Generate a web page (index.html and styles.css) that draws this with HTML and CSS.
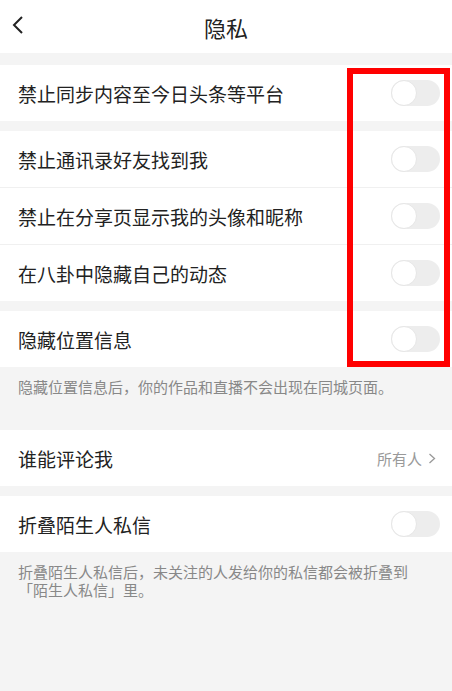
FILE: index.html
```html
<!DOCTYPE html>
<html lang="zh-CN">

<head>
    <meta charset="UTF-8">
    <meta name="viewport" content="width=device-width, initial-scale=1.0">
    <title>隐私</title>
    <link rel="stylesheet" href="styles.css">
</head>

<body>
    <header class="topBar">
        <svg class="backIcon" width="12" height="18" viewBox="0 0 12 18">
            <polyline points="10,1 2,9 10,17" fill="none" stroke="#222" stroke-width="2" />
        </svg>
        <h1>隐私</h1>
    </header>

    <div class="group first">
        <div class="row">
            <span>禁止同步内容至今日头条等平台</span>
            <span class="switch"></span>
        </div>
    </div>

    <div class="group">
        <div class="row">
            <span>禁止通讯录好友找到我</span>
            <span class="switch"></span>
        </div>
        <div class="row">
            <span>禁止在分享页显示我的头像和昵称</span>
            <span class="switch"></span>
        </div>
        <div class="row">
            <span>在八卦中隐藏自己的动态</span>
            <span class="switch"></span>
        </div>
    </div>

    <div class="group">
        <div class="row">
            <span>隐藏位置信息</span>
            <span class="switch"></span>
        </div>
    </div>
    <p class="note noteTall">隐藏位置信息后，你的作品和直播不会出现在同城页面。</p>

    <div class="group flush">
        <div class="row">
            <span>谁能评论我</span>
            <span class="value">所有人
                <svg width="8" height="11" viewBox="0 0 8 11">
                    <polyline points="1.5,1 6.5,5.5 1.5,10" fill="none" stroke="#999" stroke-width="1.3" />
                </svg>
            </span>
        </div>
    </div>

    <div class="group">
        <div class="row">
            <span>折叠陌生人私信</span>
            <span class="switch"></span>
        </div>
    </div>
    <p class="note">折叠陌生人私信后，未关注的人发给你的私信都会被折叠到「陌生人私信」里。</p>

    <!-- 标注框 -->
    <div class="markBox"></div>
</body>

</html>
```

FILE: styles.css
```css
body {
    margin: 0;
    background: #f4f4f4;
    font-family: "Noto Sans CJK SC", "Noto Sans", sans-serif;
    color: #222;
    position: relative;
    min-height: 691px;
}
.topBar {
    height: 53px;
    background: #fff;
    display: flex;
    align-items: center;
    justify-content: center;
    position: relative;
}
.topBar h1 {
    margin: 0;
    font-size: 22px;
    font-weight: normal;
    color: #222;
}
.backIcon {
    position: absolute;
    left: 12px;
    top: 16px;
}
.group {
    background: #fff;
    margin-top: 10px;
}
.group.first {
    margin-top: 12px;
}
.group.flush {
    margin-top: 0;
}
.row {
    height: 56px;
    display: flex;
    align-items: center;
    justify-content: space-between;
    padding: 0 12px 0 18px;
    font-size: 19px;
    border-bottom: 1px solid #f0f0f0;
}
.row:last-child {
    border-bottom: none;
}
.switch {
    width: 49px;
    height: 26px;
    border-radius: 13px;
    background: #ededed;
    position: relative;
}
.switch::before {
    content: "";
    position: absolute;
    left: 0;
    top: 0;
    width: 24px;
    height: 24px;
    border-radius: 50%;
    background: #fff;
    border: 1px solid #e6e6e6;
}
.value {
    display: flex;
    align-items: center;
    gap: 6px;
    font-size: 15px;
    color: #999;
    padding-right: 4px;
}
.note {
    margin: 0;
    padding: 11px 18px 0;
    font-size: 15px;
    line-height: 18px;
    color: #888;
}
.noteTall {
    height: 52px;
}
.markBox {
    position: absolute;
    left: 347px;
    top: 68px;
    width: 91px;
    height: 287px;
    border: 6px solid #f00;
}
```
